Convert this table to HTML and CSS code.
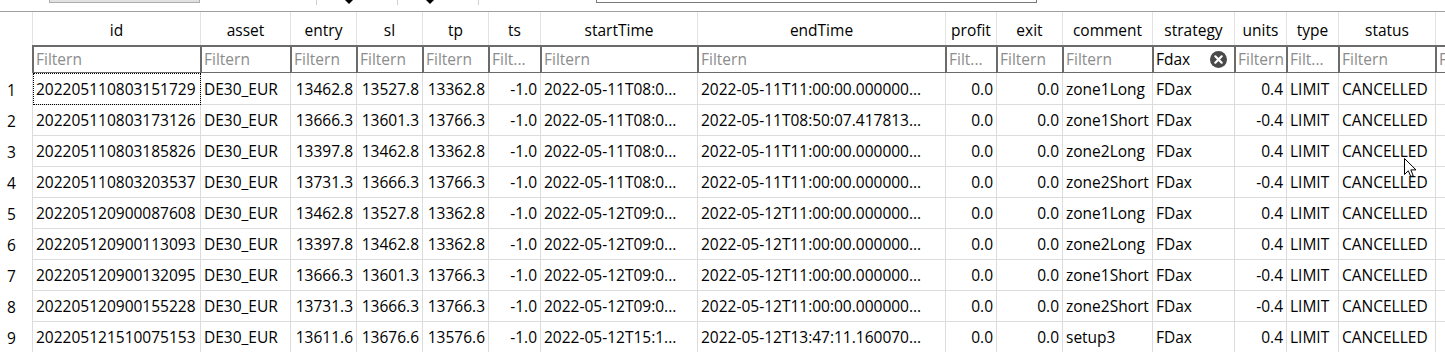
FILE: index.html
```html
<!DOCTYPE html>
<html>
<head>
<meta charset="utf-8">
<link rel="stylesheet" href="styles.css">
</head>
<body>
<div class="toolbar">
  <div class="tbtn"></div>
  <div class="tsep s1"></div>
  <div class="tarrow a1"></div>
  <div class="tsep s2"></div>
  <div class="tarrow a2"></div>
  <div class="tsep s3"></div>
  <div class="tinput"></div>
</div>
<div class="grid">
  <div class="corner"></div>
  <div class="hd">id</div><div class="hd">asset</div><div class="hd">entry</div><div class="hd">sl</div><div class="hd">tp</div><div class="hd">ts</div><div class="hd">startTime</div><div class="hd">endTime</div><div class="hd">profit</div><div class="hd">exit</div><div class="hd">comment</div><div class="hd">strategy</div><div class="hd">units</div><div class="hd">type</div><div class="hd">status</div><div class="hd"></div>

  <div class="fcorner"></div>
  <div class="fc"><div class="fbox ph">Filtern</div></div>
  <div class="fc"><div class="fbox ph">Filtern</div></div>
  <div class="fc"><div class="fbox ph">Filtern</div></div>
  <div class="fc"><div class="fbox ph">Filtern</div></div>
  <div class="fc"><div class="fbox ph">Filtern</div></div>
  <div class="fc"><div class="fbox ph">Filt...</div></div>
  <div class="fc"><div class="fbox ph">Filtern</div></div>
  <div class="fc"><div class="fbox ph">Filtern</div></div>
  <div class="fc"><div class="fbox ph">Filt...</div></div>
  <div class="fc"><div class="fbox ph">Filtern</div></div>
  <div class="fc"><div class="fbox ph">Filtern</div></div>
  <div class="fc"><div class="fbox val"><span>Fdax</span><svg class="clear" width="17" height="17" viewBox="0 0 17 17"><circle cx="8.5" cy="8.5" r="8.5" fill="#4a4a4a"/><path d="M5.3 5.3 L11.7 11.7 M11.7 5.3 L5.3 11.7" stroke="#fff" stroke-width="2.2" stroke-linecap="round"/></svg></div></div>
  <div class="fc"><div class="fbox ph">Filtern</div></div>
  <div class="fc"><div class="fbox ph">Filt...</div></div>
  <div class="fc"><div class="fbox ph">Filtern</div></div>
  <div class="fc"><div class="fbox ph">Filtern</div></div>

  <div class="rh first">1</div><div class="c first focus">202205110803151729</div><div class="c first">DE30_EUR</div><div class="c r first">13462.8</div><div class="c r first">13527.8</div><div class="c r first">13362.8</div><div class="c r first">-1.0</div><div class="c first">2022-05-11T08:0...</div><div class="c first">2022-05-11T11:00:00.000000...</div><div class="c r first">0.0</div><div class="c r first">0.0</div><div class="c first">zone1Long</div><div class="c first">FDax</div><div class="c r first">0.4</div><div class="c first">LIMIT</div><div class="c first">CANCELLED</div><div class="c first"></div>

  <div class="rh">2</div><div class="c">202205110803173126</div><div class="c">DE30_EUR</div><div class="c r">13666.3</div><div class="c r">13601.3</div><div class="c r">13766.3</div><div class="c r">-1.0</div><div class="c">2022-05-11T08:0...</div><div class="c">2022-05-11T08:50:07.417813...</div><div class="c r">0.0</div><div class="c r">0.0</div><div class="c">zone1Short</div><div class="c">FDax</div><div class="c r">-0.4</div><div class="c">LIMIT</div><div class="c">CANCELLED</div><div class="c"></div>

  <div class="rh">3</div><div class="c">202205110803185826</div><div class="c">DE30_EUR</div><div class="c r">13397.8</div><div class="c r">13462.8</div><div class="c r">13362.8</div><div class="c r">-1.0</div><div class="c">2022-05-11T08:0...</div><div class="c">2022-05-11T11:00:00.000000...</div><div class="c r">0.0</div><div class="c r">0.0</div><div class="c">zone2Long</div><div class="c">FDax</div><div class="c r">0.4</div><div class="c">LIMIT</div><div class="c">CANCELLED</div><div class="c"></div>

  <div class="rh">4</div><div class="c">202205110803203537</div><div class="c">DE30_EUR</div><div class="c r">13731.3</div><div class="c r">13666.3</div><div class="c r">13766.3</div><div class="c r">-1.0</div><div class="c">2022-05-11T08:0...</div><div class="c">2022-05-11T11:00:00.000000...</div><div class="c r">0.0</div><div class="c r">0.0</div><div class="c">zone2Short</div><div class="c">FDax</div><div class="c r">-0.4</div><div class="c">LIMIT</div><div class="c">CANCELLED</div><div class="c"></div>

  <div class="rh">5</div><div class="c">202205120900087608</div><div class="c">DE30_EUR</div><div class="c r">13462.8</div><div class="c r">13527.8</div><div class="c r">13362.8</div><div class="c r">-1.0</div><div class="c">2022-05-12T09:0...</div><div class="c">2022-05-12T11:00:00.000000...</div><div class="c r">0.0</div><div class="c r">0.0</div><div class="c">zone1Long</div><div class="c">FDax</div><div class="c r">0.4</div><div class="c">LIMIT</div><div class="c">CANCELLED</div><div class="c"></div>

  <div class="rh">6</div><div class="c">202205120900113093</div><div class="c">DE30_EUR</div><div class="c r">13397.8</div><div class="c r">13462.8</div><div class="c r">13362.8</div><div class="c r">-1.0</div><div class="c">2022-05-12T09:0...</div><div class="c">2022-05-12T11:00:00.000000...</div><div class="c r">0.0</div><div class="c r">0.0</div><div class="c">zone2Long</div><div class="c">FDax</div><div class="c r">0.4</div><div class="c">LIMIT</div><div class="c">CANCELLED</div><div class="c"></div>

  <div class="rh">7</div><div class="c">202205120900132095</div><div class="c">DE30_EUR</div><div class="c r">13666.3</div><div class="c r">13601.3</div><div class="c r">13766.3</div><div class="c r">-1.0</div><div class="c">2022-05-12T09:0...</div><div class="c">2022-05-12T11:00:00.000000...</div><div class="c r">0.0</div><div class="c r">0.0</div><div class="c">zone1Short</div><div class="c">FDax</div><div class="c r">-0.4</div><div class="c">LIMIT</div><div class="c">CANCELLED</div><div class="c"></div>

  <div class="rh">8</div><div class="c">202205120900155228</div><div class="c">DE30_EUR</div><div class="c r">13731.3</div><div class="c r">13666.3</div><div class="c r">13766.3</div><div class="c r">-1.0</div><div class="c">2022-05-12T09:0...</div><div class="c">2022-05-12T11:00:00.000000...</div><div class="c r">0.0</div><div class="c r">0.0</div><div class="c">zone2Short</div><div class="c">FDax</div><div class="c r">-0.4</div><div class="c">LIMIT</div><div class="c">CANCELLED</div><div class="c"></div>

  <div class="rh">9</div><div class="c">202205121510075153</div><div class="c">DE30_EUR</div><div class="c r">13611.6</div><div class="c r">13676.6</div><div class="c r">13576.6</div><div class="c r">-1.0</div><div class="c">2022-05-12T15:1...</div><div class="c">2022-05-12T13:47:11.160070...</div><div class="c r">0.0</div><div class="c r">0.0</div><div class="c">setup3</div><div class="c">FDax</div><div class="c r">0.4</div><div class="c">LIMIT</div><div class="c">CANCELLED</div><div class="c"></div>
</div>
<svg class="cursor" width="13" height="20" viewBox="0 0 13 20"><path d="M0.5 0.5 L0.5 16.5 L4.3 12.8 L6.8 18.6 L9.2 17.6 L6.8 11.9 L12 11.9 Z" fill="#fff" stroke="#000" stroke-width="1" stroke-linejoin="miter"/></svg>
</body>
</html>
```

FILE: styles.css
```css
html, body {
  margin: 0;
  padding: 0;
  background: #fff;
  overflow: hidden;
}
body {
  font-family: "Open Sans", "Liberation Sans", sans-serif;
  font-size: 15.5px;
  color: #000;
  position: relative;
  width: 1445px;
  height: 352px;
}

/* toolbar strip at the top (mostly scrolled out of view) */
.toolbar {
  height: 11px;
  border-bottom: 1px solid #a0a0a0;
  display: flex;
  align-items: flex-start;
  overflow: hidden;
}
.tbtn {
  margin-left: 49px;
  margin-top: -20px;
  width: 151px;
  height: 23px;
  box-sizing: border-box;
  background: #e1e1e1;
  border: 1px solid #adadad;
}
.tsep {
  width: 1px;
  height: 5px;
  background: #d0d0d0;
}
.s1 { margin-left: 116px; }
.tarrow {
  width: 0;
  height: 0;
  border-left: 4px solid transparent;
  border-right: 4px solid transparent;
  border-top: 4px solid #000;
}
.a1, .a2 { margin-left: 28px; margin-right: 44px; }
.tinput {
  margin-left: 117px;
  margin-top: -20px;
  width: 441px;
  height: 23px;
  box-sizing: border-box;
  border: 1px solid #7a7a7a;
  background: #fff;
}

/* table */
.grid {
  display: grid;
  grid-template-columns: 33px 168px 90px 66px 66px 66px 52px 157px 248px 51px 66px 90px 82px 52px 52px 97px 120px;
  grid-template-rows: 33px 28px 32px repeat(8, 31px);
  width: 1445px;
  overflow: hidden;
}
.grid > div {
  box-sizing: border-box;
  min-width: 0;
  white-space: nowrap;
  overflow: hidden;
}
.corner {
  border-right: 1px solid #e3e3e3;
}
.hd {
  border-right: 1px solid #e3e3e3;
  display: flex;
  align-items: center;
  justify-content: center;
  padding-top: 3px;
}
.fcorner {
  border-right: 1px solid #6b6b6b;
}
.fc {
  border-right: 1px solid #6b6b6b;
  border-bottom: 1px solid #6b6b6b;
}
.fbox {
  box-sizing: border-box;
  height: 27px;
  border-top: 2px solid #6b6b6b;
  border-left: 1px solid #6b6b6b;
  padding: 0 0 1px 2px;
  display: flex;
  align-items: center;
  overflow: hidden;
  white-space: nowrap;
}
.ph { color: #8c8c8c; }
.val {
  color: #000;
  justify-content: space-between;
  padding-right: 7px;
}
.clear { flex: none; }

.rh {
  border-right: 1px solid #dcdcdc;
  display: flex;
  align-items: center;
  padding-left: 7px;
}
.c {
  border-right: 1px solid #dcdcdc;
  border-bottom: 1px solid #dcdcdc;
  display: flex;
  align-items: center;
  padding: 0 3px;
}
.c.r { justify-content: flex-end; }
.first { padding-top: 1px; }
.focus {
  outline: 1px dotted #000;
  outline-offset: -1px;
}

.cursor {
  position: absolute;
  left: 1404px;
  top: 158px;
}
```
